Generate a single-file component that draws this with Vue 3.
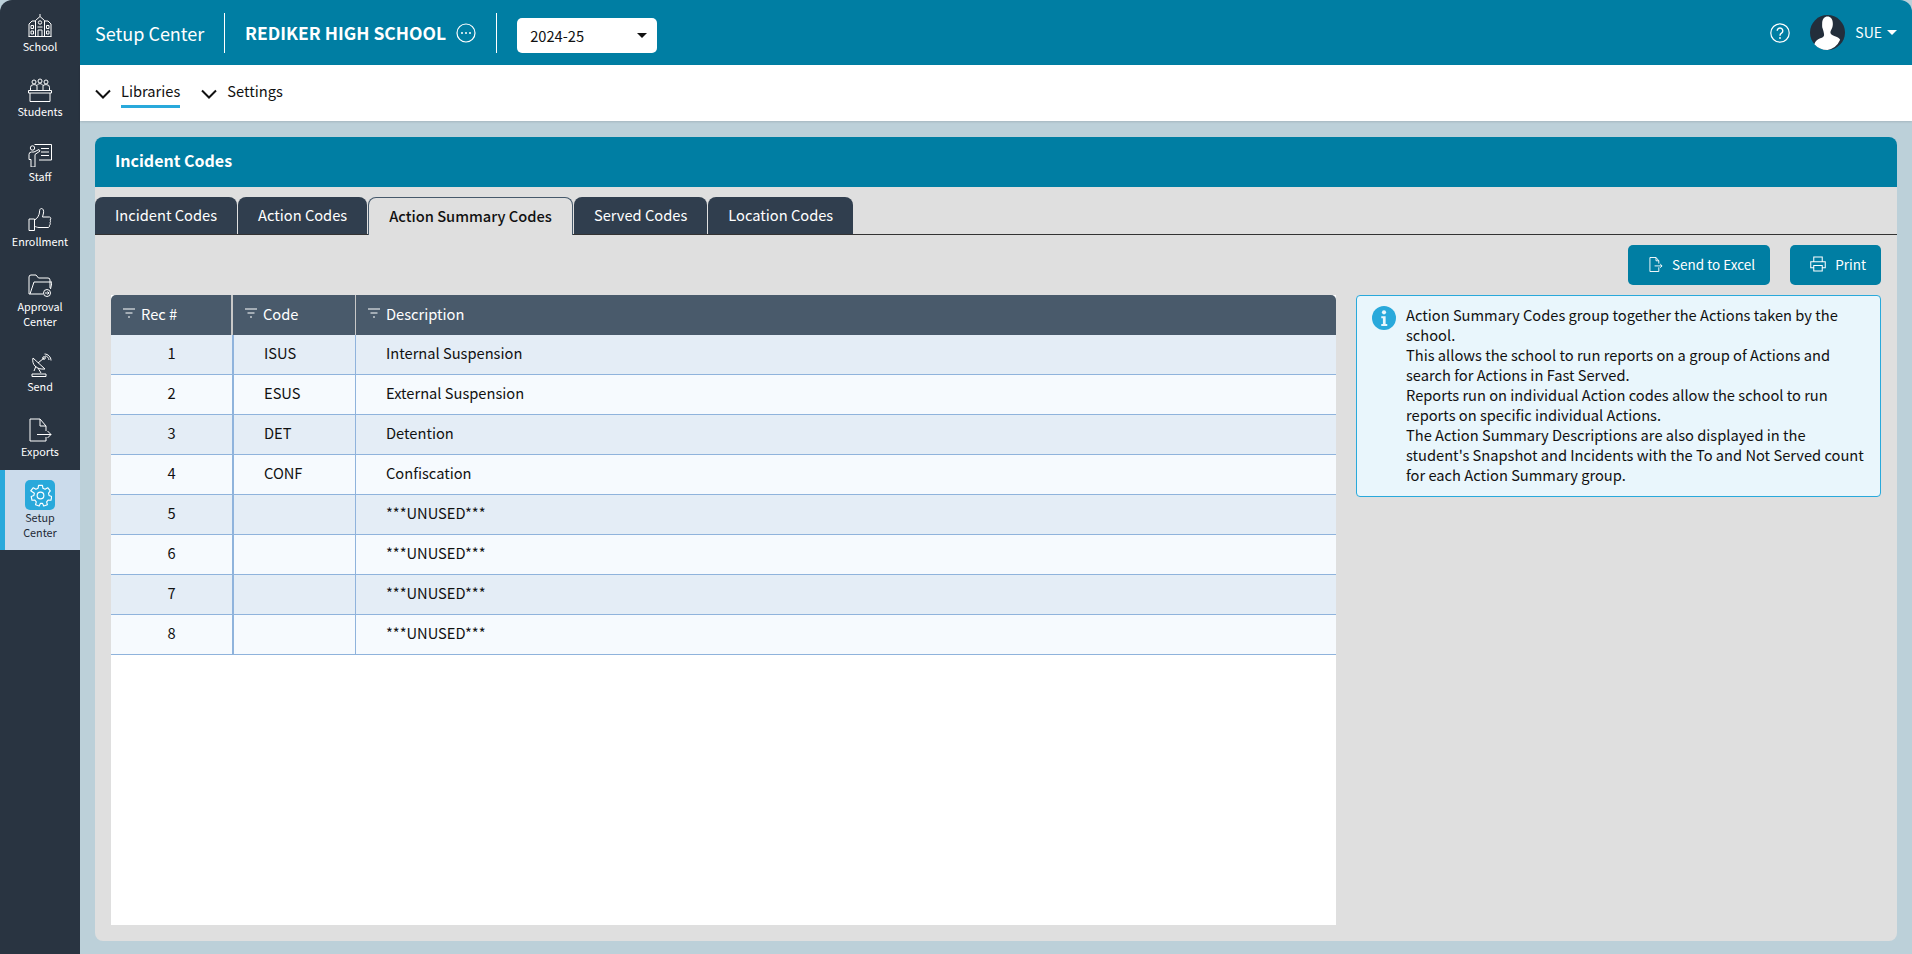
<script setup>
const nav = [
  { label: ['School'], icon: 'school' },
  { label: ['Students'], icon: 'students' },
  { label: ['Staff'], icon: 'staff' },
  { label: ['Enrollment'], icon: 'enroll' },
  { label: ['Approval', 'Center'], icon: 'approval' },
  { label: ['Send'], icon: 'send' },
  { label: ['Exports'], icon: 'exports' },
]
const tabs = ['Incident Codes', 'Action Codes', 'Action Summary Codes', 'Served Codes', 'Location Codes']
const rows = [
  [1, 'ISUS', 'Internal Suspension'],
  [2, 'ESUS', 'External Suspension'],
  [3, 'DET', 'Detention'],
  [4, 'CONF', 'Confiscation'],
  [5, '', '***UNUSED***'],
  [6, '', '***UNUSED***'],
  [7, '', '***UNUSED***'],
  [8, '', '***UNUSED***'],
]
</script>

<template>
  <div class="app">
    <aside class="side">
      <div v-for="n in nav" :key="n.icon" class="nav" :class="{ two: n.label.length > 1 }">
        <svg class="nicon" viewBox="0 0 24 24" fill="none" stroke="#fff" stroke-width="1" stroke-linejoin="round">
          <template v-if="n.icon === 'school'">
            <path d="M.5 23.500h23M1 23.500V11l3-3h3.500M23 23.500V11l-3-3h-3.500M7.500 23.500V7.500L12 3.500l4.500 4v16M12 3.500V1M10 23.500V17h4v6.500" />
            <circle cx="12" cy="9.500" r="1.700" />
            <path d="M3 12.500h2.500v3H3zM3 18h2.500v3H3zM18.500 12.500H21v3h-2.500zM18.500 18H21v3h-2.500zM9.500 14h5" />
          </template>
          <template v-else-if="n.icon === 'students'">
            <circle cx="6" cy="4" r="2" /><circle cx="12" cy="3" r="2" /><circle cx="18" cy="4" r="2" />
            <path d="M2.500 12V9.500a2.800 2.800 0 0 1 2.800-2.800h1.500c1 0 1.700.5 2.200 1V12M9 7.500c.7-1.200 1.700-1.800 3-1.800s2.300.6 3 1.800V12M15 7.700c.5-.5 1.200-1 2.200-1h1.500a2.800 2.800 0 0 1 2.800 2.800V12" />
            <path d="M.5 12.500h23v2.500H.5zM2 15v8.500h20V15" />
          </template>
          <template v-else-if="n.icon === 'staff'">
            <circle cx="4.500" cy="5" r="2.200" />
            <path d="M6.500 1.500h17v15.500H11M13 5.500h8M13 9h8M13 12.500h8M1 16.500v-5a2.500 2.500 0 0 1 2.500-2.500H6l5-2.500 1 1.500-5 3.500v12.500H3V16.500z" />
          </template>
          <template v-else-if="n.icon === 'enroll'">
            <path d="M1 11h5.500v11.500H1zM6.500 12c2.500-1 5-5 5-8 0-2 .5-3.500 2-3.500s2.500 2 2 4.500l-1 4h7c1 0 1.500 1 1.200 2l-.7 1c.7.700.7 2 0 2.700.5.800.3 2-.5 2.600.3 1-.3 2.200-1.500 2.200H11c-2 0-3-1-4.500-1" />
          </template>
          <template v-else-if="n.icon === 'approval'">
            <path d="M15 21H1V4a2 2 0 0 1 2-2h5l2.500 3H20a2 2 0 0 1 2 2v8M2 21L6 9h18l-1.500 7" />
            <circle cx="19" cy="20" r="3.500" /><path d="M17 20h4M19.500 18.500L21 20l-1.500 1.500" />
          </template>
          <template v-else-if="n.icon === 'send'">
            <path d="M6 18l2-5M10 15l3 5M4 23.500h14v-2.500H4zM5 5c-1.500 6 3 12 12 11zM10 10l6-5" />
            <circle cx="16" cy="5" r="1.300" />
            <path d="M16.500 1c3.500 0 6.500 3 6.500 6.500M17 3c2 0 4 1.800 4 4" />
          </template>
          <template v-else>
            <path d="M18 13V8l-6-7H2v22h16v-4M12 1v7h6M9 16.500h14M19.500 13l3.500 3.500-3.500 3.500" />
          </template>
        </svg>
        <span v-for="l in n.label" :key="l" class="nlabel">{{ l }}</span>
      </div>
      <div class="nav active">
        <div class="gear">
          <svg viewBox="0 0 24 24" fill="none" stroke="#fff" stroke-width="1.200" stroke-linejoin="round">
            <circle cx="12" cy="12" r="3.500" />
            <path d="M10 1.500h4l.6 3 2.200 1 2.700-1.600 2.700 3.200-1.800 2.500.5 2.400 2.800 1-.8 4-3-.1-1.500 1.800.8 3-3.800 1.300-1.400-2.800h-2l-1.400 2.800-3.800-1.300.8-3-1.500-1.800-3 .1-.8-4 2.800-1 .5-2.400L1.800 7.100l2.700-3.200 2.700 1.600 2.200-1z" />
          </svg>
        </div>
        <span class="nlabel">Setup</span><span class="nlabel">Center</span>
      </div>
    </aside>
    <div class="main">
      <header class="top">
        <span class="app-name">Setup Center</span>
        <span class="sep"></span>
        <span class="school">REDIKER HIGH SCHOOL</span>
        <svg class="dots" viewBox="0 0 20 20" fill="none" stroke="#fff" stroke-width="1.200">
          <circle cx="10" cy="10" r="9" />
          <circle cx="6" cy="10" r="1" fill="#fff" stroke="none" /><circle cx="10" cy="10" r="1" fill="#fff" stroke="none" /><circle cx="14" cy="10" r="1" fill="#fff" stroke="none" />
        </svg>
        <span class="sep sep2"></span>
        <div class="year"><span>2024-25</span><i class="caret"></i></div>
        <div class="right">
          <svg class="help" viewBox="0 0 20 20" fill="none" stroke="#fff" stroke-width="1.200">
            <circle cx="10" cy="10" r="9.200" />
            <path d="M7.200 7.800a2.800 2.800 0 1 1 4.300 2.400c-1 .6-1.500 1.100-1.500 2.600" stroke-width="1.400" />
            <circle cx="10" cy="15" r=".9" fill="#fff" stroke="none" />
          </svg>
          <svg class="avatar" viewBox="0 0 36 36">
            <circle cx="18" cy="18" r="18" fill="#232e3b" />
            <path d="M12.500 11c0-5 2.500-7.500 5.500-7.500s5.500 2.500 5.500 7.500c0 2-.3 3.500-1 5-.6 1.500-1.500 2.600-1.500 4 0 1.500 1.500 2.500 4 3.500 3 1 5 2 6 4A18 18 0 0 1 18 38 18 18 0 0 1 4.500 32c1-3 3-5 6-6 2.500-1 4-2 4-3.500 0-1.500-.9-5-1.500-6.500-.7-1.500-.5-3-.5-5z" fill="#fff" transform="translate(0 -2)" />
          </svg>
          <span class="user">SUE</span>
          <i class="caret white"></i>
        </div>
      </header>
      <nav class="sub">
        <div class="subitem">
          <svg class="chev" viewBox="0 0 16 10"><path d="M1 1.500L8 8.500l7-7" fill="none" stroke="#111" stroke-width="2" /></svg>
          <span class="sublabel on">Libraries</span>
        </div>
        <div class="subitem">
          <svg class="chev" viewBox="0 0 16 10"><path d="M1 1.500L8 8.500l7-7" fill="none" stroke="#111" stroke-width="2" /></svg>
          <span class="sublabel">Settings</span>
        </div>
      </nav>
      <div class="content">
        <section class="panel">
          <div class="ptitle">Incident Codes</div>
          <div class="tabs">
            <div v-for="t in tabs" :key="t" class="tab" :class="{ cur: t === 'Action Summary Codes' }">{{ t }}</div>
          </div>
          <div class="pbody">
            <div class="actions">
              <button class="btn">
                <svg viewBox="0 0 15 18" fill="none" stroke="#fff" stroke-width="1"><path d="M10.500 12v4.500H1v-15h6.500L10.500 5v3M7.500 1.500V5h3M6 10.500h8M12 8.500l2 2-2 2" /></svg>
                Send to Excel
              </button>
              <button class="btn print">
                <svg viewBox="0 0 17 17" fill="none" stroke="#fff" stroke-width="1.100"><path d="M4 6V1h9v5M4 12.500H.8V6h15.400v6.500H13M4 10h9v6H4z" /></svg>
                Print
              </button>
            </div>
            <div class="split">
              <div class="tablewrap">
                <div class="thead">
                  <div class="th c1"><svg class="filt" viewBox="0 0 12 10"><path d="M0 1h12M2.500 5h7M5 9h2" stroke="#fff" stroke-width="1.100" /></svg>Rec #</div>
                  <div class="th c2"><svg class="filt" viewBox="0 0 12 10"><path d="M0 1h12M2.500 5h7M5 9h2" stroke="#fff" stroke-width="1.100" /></svg>Code</div>
                  <div class="th c3"><svg class="filt" viewBox="0 0 12 10"><path d="M0 1h12M2.500 5h7M5 9h2" stroke="#fff" stroke-width="1.100" /></svg>Description</div>
                </div>
                <div v-for="(r, i) in rows" :key="r[0]" class="tr" :class="{ odd: i % 2 === 0 }">
                  <div class="td c1 num">{{ r[0] }}</div>
                  <div class="td c2">{{ r[1] }}</div>
                  <div class="td c3">{{ r[2] }}</div>
                </div>
              </div>
              <div class="info">
                <svg class="iicon" viewBox="0 0 22 22">
                  <circle cx="11" cy="11" r="11" fill="#29a9db" />
                  <circle cx="11" cy="5.800" r="1.900" fill="#e9f6fc" />
                  <path d="M8.500 9.500h4v7h1.500v1.800H8.500v-1.800H10v-5.200H8.500z" fill="#e9f6fc" />
                </svg>
                <p>Action Summary Codes group together the Actions taken by the school.<br />This allows the school to run reports on a group of Actions and search for Actions in Fast Served.<br />Reports run on individual Action codes allow the school to run reports on specific individual Actions.<br />The Action Summary Descriptions are also displayed in the student's Snapshot and Incidents with the To and Not Served count for each Action Summary group.</p>
              </div>
            </div>
          </div>
        </section>
      </div>
    </div>
  </div>
</template>

<style>
html, body { margin: 0; background: #232e3b; }
</style>

<style scoped>
.app {
  display: flex; width: 1912px; height: 954px; overflow: hidden;
  font-family: "Noto Sans CJK JP", "Noto Sans", sans-serif; font-size: 14.67px; color: #111;
  background: #bcd0d9;
}
.side { width: 80px; flex: none; background: #293441; border-top-left-radius: 12px; display: flex; flex-direction: column; box-sizing: border-box; }
.nav { height: 65px; padding-top: 13px; box-sizing: border-box; display: flex; flex-direction: column; align-items: center; color: #fff; font-size: 10.8px; line-height: 15px; flex: none; }
.nicon { width: 24px; height: 24px; flex: none; margin-bottom: 2px; }
.nav.two { height: 80px; }
.nlabel { display: block; }
.nav.active { height: 80px; background: #cbdbeb; color: #1e2a36; border-left: 5px solid #29a9db; padding-top: 10px; padding-right: 5px; }
.gear { width: 30px; height: 30px; border-radius: 5px; background: #29a9db; display: flex; align-items: center; justify-content: center; flex: none; }
.gear svg { width: 23px; height: 23px; }
.main { flex: 1; display: flex; flex-direction: column; min-width: 0; background: #bcd0d9; }
.top { height: 65px; flex: none; background: #007ea3; color: #fff; display: flex; align-items: center; padding-left: 15px; border-top-right-radius: 12px; box-sizing: border-box; }
.app-name { font-size: 18px; width: 129px; }
.sep { width: 1px; height: 40px; background: #fff; flex: none; }
.school { font-size: 17.5px; font-weight: 700; margin-left: 20px; }
.dots { width: 20px; height: 20px; margin-left: 10px; }
.sep2 { margin-left: 20px; }
.year { width: 140px; height: 35px; background: #fff; border-radius: 5px; margin: 6px 0 0 20px; color: #111; display: flex; align-items: center; justify-content: space-between; padding: 0 10px 1px 13px; box-sizing: border-box; }
.caret { width: 0; height: 0; border-left: 5px solid transparent; border-right: 5px solid transparent; border-top: 5px solid #111; }
.caret.white { border-top-color: #fff; margin-right: 15px; margin-left: 5px; }
.right { margin-left: auto; display: flex; align-items: center; }
.help { width: 20px; height: 20px; margin-right: 20px; }
.avatar { width: 35px; height: 35px; margin-right: 10px; }
.user { font-size: 14px; padding-bottom: 2px; }
.sub { height: 56px; flex: none; background: #fff; display: flex; align-items: flex-start; padding-left: 15px; box-sizing: border-box; gap: 21px; box-shadow: 0 1px 2px rgba(0,0,0,.12); position: relative; }
.subitem { display: flex; align-items: flex-start; }
.chev { width: 16px; height: 10px; margin-top: 24px; margin-right: 10px; }
.sublabel { line-height: 20px; padding-top: 16px; padding-bottom: 4px; border-bottom: 3px solid transparent; }
.sublabel.on { border-bottom-color: #29a9db; }
.content { flex: 1; min-height: 0; padding: 16px 15px 13px; display: flex; }
.panel { flex: 1; display: flex; flex-direction: column; background: #dfdfdf; border-radius: 8px; overflow: hidden; }
.ptitle { height: 50px; flex: none; background: #007ea3; color: #fff; font-weight: 700; font-size: 16px; line-height: 47px; padding-left: 20px; }
.tabs { display: flex; flex: none; margin-top: 10px; height: 38px; border-bottom: 1px solid #333; box-sizing: border-box; gap: 1px; }
.tab { height: 37px; background: #303e4e; color: #fff; padding: 0 20px; line-height: 35px; border-radius: 8px 8px 0 0; box-sizing: border-box; }
.tab.cur { background: #dfdfdf; color: #111; font-weight: 500; line-height: 36px; border: 1px solid #46596b; border-bottom: 0; height: 38px; padding: 0 20px; }
.pbody { flex: 1; min-height: 0; display: flex; flex-direction: column; padding: 10px 16px 16px; }
.actions { display: flex; justify-content: flex-end; gap: 20px; flex: none; }
.btn { height: 40px; background: #007ea3; border: 0; border-radius: 5px; color: #fff; font: inherit; font-size: 13.5px; display: flex; align-items: center; padding: 0 15px 2px 21px; gap: 9px; }
.btn svg { width: 14px; height: 17px; }
.btn.print { padding: 0 15px 2px 20px; }
.btn.print svg { width: 16px; height: 16px; }
.split { flex: 1; min-height: 0; display: flex; margin-top: 10px; gap: 20px; align-items: flex-start; }
.tablewrap { width: 1225px; height: 100%; flex: none; background: #fff; }
.thead { display: flex; height: 40px; background: #495a6b; color: #fff; border-radius: 5px 5px 0 0; }
.th { display: flex; align-items: center; padding: 0 0 4px 12px; gap: 6px; box-sizing: border-box; }
.filt { width: 12px; height: 10px; }
.c1 { width: 123px; flex: none; }
.c2 { width: 122px; flex: none; }
.c3 { flex: 1; }
.th.c1 { width: 122px; border-right: 2px solid #c8c8c8; }
.th.c2 { width: 123px; border-right: 1px solid #c8c8c8; }
.tr { display: flex; height: 40px; background: #f6fafe; border-bottom: 1px solid #8fb3dc; box-sizing: border-box; }
.tr.odd { background: #e4edf6; }
.td { padding-left: 30px; line-height: 36px; box-sizing: border-box; }
.td.c1 { border-right: 2px solid #8fb3dc; padding: 0; text-align: center; }
.td.c2 { border-right: 1px solid #8fb3dc; padding-left: 30px; }
.info { flex: 1; display: flex; background: #e9f6fc; border: 1px solid #29a9db; border-radius: 4px; box-sizing: border-box; padding: 9px 14px 11px 15px; gap: 10px; }
.iicon { width: 24px; height: 24px; flex: none; margin-top: 1px; }
.info p { margin: 0; line-height: 20px; }
</style>
